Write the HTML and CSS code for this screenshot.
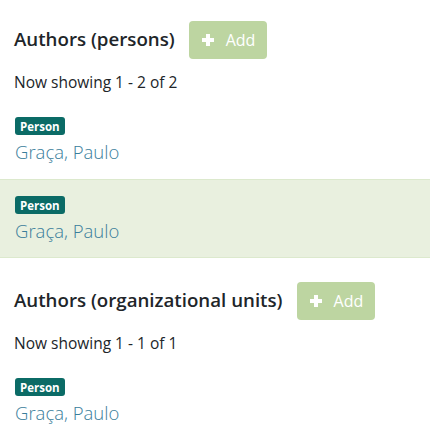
FILE: index.html
```html
<!DOCTYPE html>
<html>
<head>
<meta charset="utf-8">
<link rel="stylesheet" href="styles.css">
</head>
<body>
<section class="block">
  <div class="head">
    <h2 class="title">Authors (persons)</h2>
    <button class="add" type="button">
      <svg class="plus" viewBox="0 0 12 12" width="12" height="12"><path d="M4 0h4v4h4v4H8v4H4V8H0V4h4z" fill="#fff"/></svg>
      <span>Add</span>
    </button>
  </div>
  <p class="count">Now showing 1 - 2 of 2</p>
  <ul class="list">
    <li class="item">
      <span class="badge">Person</span>
      <a class="name">Graça, Paulo</a>
    </li>
    <li class="item hl">
      <span class="badge">Person</span>
      <a class="name">Graça, Paulo</a>
    </li>
  </ul>
</section>
<section class="block">
  <div class="head">
    <h2 class="title">Authors (organizational units)</h2>
    <button class="add" type="button">
      <svg class="plus" viewBox="0 0 12 12" width="12" height="12"><path d="M4 0h4v4h4v4H8v4H4V8H0V4h4z" fill="#fff"/></svg>
      <span>Add</span>
    </button>
  </div>
  <p class="count">Now showing 1 - 1 of 1</p>
  <ul class="list">
    <li class="item">
      <span class="badge">Person</span>
      <a class="name">Graça, Paulo</a>
    </li>
  </ul>
</section>
</body>
</html>
```
FILE: styles.css
```css
html, body {
  margin: 0;
  padding: 0;
  background: #fff;
}
body {
  font-family: "Open Sans", "Noto Sans", sans-serif;
  color: #212529;
  width: 430px;
}
.block {
  padding-top: 21px;
}
.block + .block {
  padding-top: 24px;
}
.head {
  display: flex;
  align-items: center;
  gap: 14px;
  padding-left: 14px;
  height: 38px;
}
.title {
  margin: 0 0 3px;
  font-size: 18.7px;
  line-height: 24px;
  font-weight: 600;
  color: #212529;
}
.add {
  display: flex;
  align-items: center;
  gap: 12px;
  height: 38px;
  padding: 0 12px 0 13px;
  border: 0;
  border-radius: 4px;
  background: #bdd5a1;
  color: #fff;
  font-family: inherit;
  font-size: 16px;
  cursor: default;
}
.count {
  margin: 13px 0 0 14px;
  font-size: 15.5px;
  line-height: 20px;
}
.list {
  list-style: none;
  margin: 8px 0 0;
  padding: 0;
}
.item {
  display: flex;
  flex-direction: column;
  align-items: flex-start;
  padding: 16px 15px 13px;
  border-top: 1px solid transparent;
  border-bottom: 1px solid transparent;
}
.item.hl {
  background: #e9f0df;
  border-color: #dce9cd;
}
.badge {
  display: inline-flex;
  align-items: center;
  height: 18px;
  background: #0b6b66;
  color: #fff;
  font-size: 11.5px;
  font-weight: 700;
  padding: 0 5px;
  border-radius: 3px;
}
.name {
  margin-top: 3px;
  font-size: 18.5px;
  font-weight: 300;
  color: #3a7e9b;
  line-height: 27px;
}
```
